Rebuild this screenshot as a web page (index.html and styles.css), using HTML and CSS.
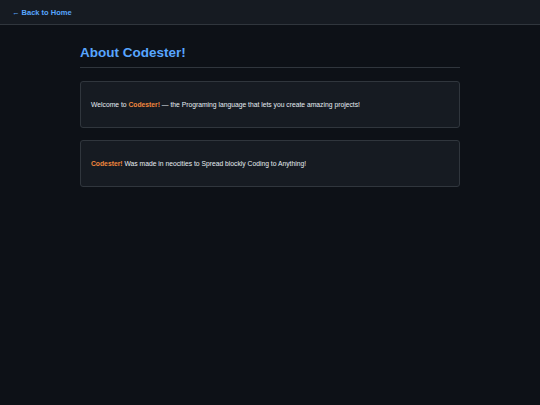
FILE: index.html
```html
<!DOCTYPE html>
<html lang="en">
<head>
    <meta charset="UTF-8">
    <meta name="viewport" content="width=device-width, initial-scale=1.0">
    <title>About Codester!</title>
    <link rel="stylesheet" href="styles.css">
</head>
<body>
    <header class="topbar">
        <a href="#" class="back-link">&larr; Back to Home</a>
    </header>

    <main class="container">
        <h1>About Codester!</h1>

        <div class="card">
            <p>Welcome to <span class="brand">Codester!</span> &mdash; the Programing language that lets you create amazing projects!</p>
        </div>

        <div class="card">
            <p><span class="brand">Codester!</span> Was made in neocities to Spread blockly Coding to Anything!</p>
        </div>
    </main>
</body>
</html>
```

FILE: styles.css
```css
body {
    margin: 0;
    font-family: "Liberation Sans", Arial, sans-serif;
    background: #0d1117;
    color: #e6edf3;
    min-height: 405px;
}
.topbar {
    background: #161b22;
    border-bottom: 1px solid #30363d;
    height: 24px;
    display: flex;
    align-items: center;
    padding: 0 12px;
}
.back-link {
    color: #58a6ff;
    font-size: 7.5px;
    font-weight: bold;
    text-decoration: none;
}
.container {
    width: 380px;
    margin: 0 auto;
    padding-top: 20px;
}
h1 {
    color: #58a6ff;
    font-size: 13.5px;
    margin: 0 0 13px;
    padding-bottom: 7px;
    border-bottom: 1px solid #30363d;
}
.card {
    background: #161b22;
    border: 1px solid #30363d;
    border-radius: 3px;
    padding: 0 10px;
    height: 45px;
    display: flex;
    align-items: center;
    margin-bottom: 12px;
}
.card p {
    margin: 0;
    font-size: 6.75px;
}
.brand {
    color: #f0883e;
    font-weight: bold;
}
```
